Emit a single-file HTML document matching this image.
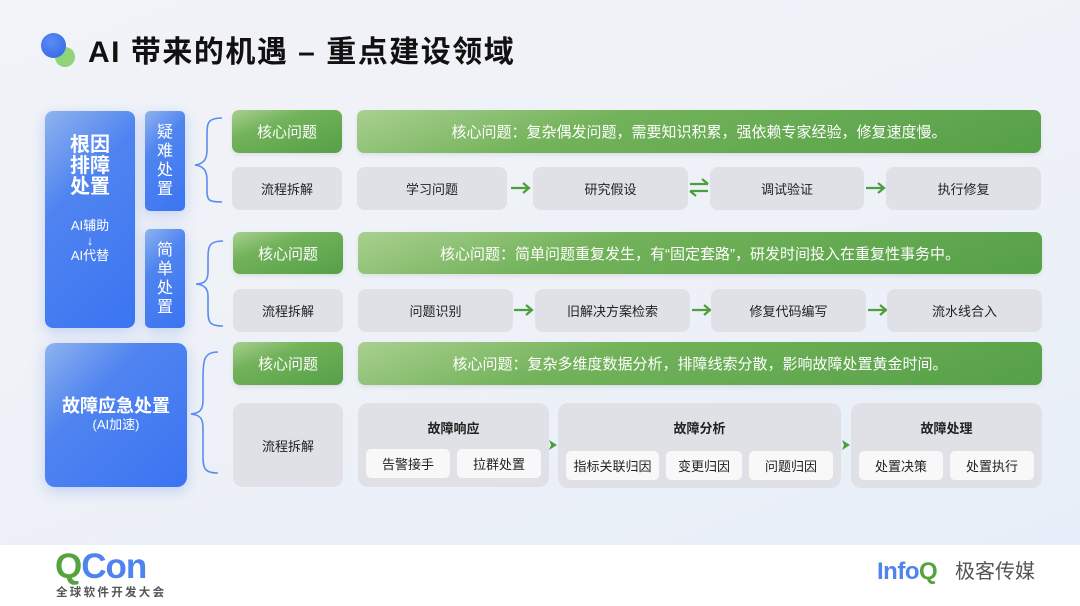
<!DOCTYPE html><html><head><meta charset="utf-8"><style>
*{margin:0;padding:0;box-sizing:border-box}
body{width:1080px;height:606px;position:relative;overflow:hidden;font-family:"Liberation Sans","Noto Sans CJK SC",sans-serif;background:linear-gradient(160deg,#f1f3f8 0%,#eef1f7 50%,#e6eef9 100%)}
.a{position:absolute}
.c{display:flex;align-items:center;justify-content:center;text-align:center}
.g{background:linear-gradient(160deg,#a9d08f 0%,#72b25a 35%,#55a047 100%);color:#fff;border-radius:7px;font-size:15px;box-shadow:0 2px 4px rgba(0,0,0,.08)}
.gr{background:#dfe1e6;border-radius:8px;font-size:13px;color:#222}
.b{background:linear-gradient(135deg,#8fb3ee 0%,#4f84f0 35%,#3b74f2 100%);color:#fff;border-radius:8px;box-shadow:0 4px 14px rgba(60,110,230,.25)}
.w{background:#f8f8f9;border-radius:5px;font-size:13px;color:#222}
.h{font-size:13px;font-weight:bold;color:#222}
</style></head><body>
<div class="a" style="left:0;top:545px;width:1080px;height:61px;background:#fff"></div>
<div class="a" style="left:55px;top:47px;width:20px;height:20px;border-radius:50%;background:#8fd478"></div>
<div class="a" style="left:41px;top:33px;width:25px;height:25px;border-radius:50%;background:radial-gradient(circle at 40% 35%,#5b8cf5,#2f63e8)"></div>
<div class="a" style="left:88px;top:27px;font-size:30px;font-weight:bold;color:#111;letter-spacing:1.5px">AI 带来的机遇 – 重点建设领域</div>

<div class="a b" style="left:45px;top:111px;width:90px;height:217px"></div>
<div class="a" style="left:45px;top:135px;width:90px;text-align:center;color:#fff;font-size:20px;font-weight:bold;line-height:21px">根因<br>排障<br>处置</div>
<div class="a" style="left:45px;top:218px;width:90px;text-align:center;color:#fff;font-size:13px;line-height:15px">AI辅助<br>↓<br>AI代替</div>
<div class="a b c" style="left:145px;top:111px;width:40px;height:100px;font-size:16px;line-height:19px;border-radius:5px">疑<br>难<br>处<br>置</div>
<div class="a b c" style="left:145px;top:229px;width:40px;height:99px;font-size:16px;line-height:19px;border-radius:5px">简<br>单<br>处<br>置</div>

<svg class="a" style="left:0;top:0" width="1080" height="545" fill="none" stroke="#5b8df0" stroke-width="1.6">
<path d="M222 118 C206 118 207 124 207 140 L207 150 C207 160 203 164 195 165 C203 166 207 170 207 180 L207 190 C207 200 208 202 222 202"/>
<path d="M223 241 C208 241 208 247 208 262 L208 272 C208 281 204 284 196 284 C204 285 208 288 208 296 L208 310 C208 322 209 326 223 326"/>
<path d="M218 352 C204 352 203 360 203 378 L203 400 C203 410 200 413 191 414 C200 415 203 418 203 428 L203 455 C203 468 204 473 218 473"/>
<g stroke="#4d9f3e" stroke-width="2.2">
<path d="M511 188 H529 M523 183 L529 188 L523 193"/>
<path d="M690 184 H708 M702 179 L708 184 M690 191 H708 M696 196 L690 191"/>
<path d="M866 188 H884 M878 183 L884 188 L878 193"/>
<path d="M514 310 H532 M526 305 L532 310 L526 315"/>
<path d="M692 310 H710 M704 305 L710 310 L704 315"/>
<path d="M868 310 H886 M880 305 L886 310 L880 315"/>
</g>
<g fill="#4d9f3e" stroke="none"><path d="M549 440 L557 445 L549 450 L551 445Z"/><path d="M842 440 L850 445 L842 450 L844 445Z"/></g>
</svg>

<div class="a g c" style="left:232px;top:110px;width:110px;height:43px">核心问题</div>
<div class="a g c" style="left:357px;top:110px;width:684px;height:43px">核心问题：复杂偶发问题，需要知识积累，强依赖专家经验，修复速度慢。</div>
<div class="a gr c" style="left:232px;top:167px;width:110px;height:43px">流程拆解</div>
<div class="a gr c" style="left:357px;top:167px;width:150px;height:43px">学习问题</div>
<div class="a gr c" style="left:533px;top:167px;width:155px;height:43px">研究假设</div>
<div class="a gr c" style="left:710px;top:167px;width:154px;height:43px">调试验证</div>
<div class="a gr c" style="left:886px;top:167px;width:155px;height:43px">执行修复</div>

<div class="a g c" style="left:233px;top:232px;width:110px;height:42px">核心问题</div>
<div class="a g c" style="left:358px;top:232px;width:684px;height:42px">核心问题：简单问题重复发生，有“固定套路”，研发时间投入在重复性事务中。</div>
<div class="a gr c" style="left:233px;top:289px;width:110px;height:43px">流程拆解</div>
<div class="a gr c" style="left:358px;top:289px;width:155px;height:43px">问题识别</div>
<div class="a gr c" style="left:535px;top:289px;width:155px;height:43px">旧解决方案检索</div>
<div class="a gr c" style="left:711px;top:289px;width:155px;height:43px">修复代码编写</div>
<div class="a gr c" style="left:887px;top:289px;width:155px;height:43px">流水线合入</div>

<div class="a b" style="left:45px;top:343px;width:142px;height:144px;border-radius:10px"></div>
<div class="a" style="left:45px;top:396px;width:142px;text-align:center;color:#fff;font-size:18px;font-weight:bold;line-height:21px">故障应急处置<div style="font-size:13px;font-weight:normal;line-height:15px">(AI加速)</div></div>

<div class="a g c" style="left:233px;top:342px;width:110px;height:43px">核心问题</div>
<div class="a g c" style="left:358px;top:342px;width:684px;height:43px">核心问题：复杂多维度数据分析，排障线索分散，影响故障处置黄金时间。</div>
<div class="a gr c" style="left:233px;top:403px;width:110px;height:84px;border-radius:10px">流程拆解</div>

<div class="a gr" style="left:358px;top:403px;width:191px;height:84px;border-radius:10px"></div>
<div class="a h" style="left:358px;top:418px;width:191px;text-align:center">故障响应</div>
<div class="a w c" style="left:366px;top:449px;width:84px;height:29px">告警接手</div>
<div class="a w c" style="left:457px;top:449px;width:84px;height:29px">拉群处置</div>

<div class="a gr" style="left:558px;top:403px;width:283px;height:85px;border-radius:10px"></div>
<div class="a h" style="left:558px;top:418px;width:283px;text-align:center">故障分析</div>
<div class="a w c" style="left:566px;top:451px;width:93px;height:29px">指标关联归因</div>
<div class="a w c" style="left:666px;top:451px;width:76px;height:29px">变更归因</div>
<div class="a w c" style="left:749px;top:451px;width:84px;height:29px">问题归因</div>

<div class="a gr" style="left:851px;top:403px;width:191px;height:85px;border-radius:10px"></div>
<div class="a h" style="left:851px;top:418px;width:191px;text-align:center">故障处理</div>
<div class="a w c" style="left:859px;top:451px;width:84px;height:29px">处置决策</div>
<div class="a w c" style="left:950px;top:451px;width:84px;height:29px">处置执行</div>

<div class="a" style="left:55px;top:547px;font-size:35px;font-weight:bold;letter-spacing:-1px;line-height:40px"><span style="color:#55a33e">Q</span><span style="color:#4f84f0">Con</span></div>
<div class="a" style="left:56px;top:584px;font-size:11.5px;font-weight:bold;color:#555;letter-spacing:2.3px">全球软件开发大会</div>
<div class="a" style="left:877px;top:557px;font-size:24px;font-weight:bold;line-height:30px;letter-spacing:-0.5px"><span style="color:#4f84f0">Info</span><span style="color:#55a33e">Q</span></div>
<div class="a" style="left:955px;top:558px;font-size:20px;color:#555;line-height:28px">极客传媒</div>
</body></html>
